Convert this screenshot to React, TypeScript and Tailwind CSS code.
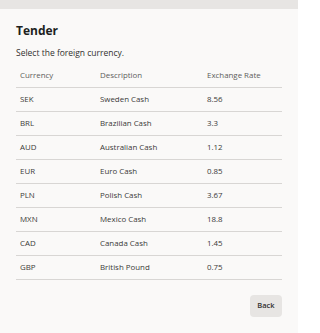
const rows = [
  { code: 'SEK', desc: 'Sweden Cash', rate: '8.56' },
  { code: 'BRL', desc: 'Brazilian Cash', rate: '3.3' },
  { code: 'AUD', desc: 'Australian Cash', rate: '1.12' },
  { code: 'EUR', desc: 'Euro Cash', rate: '0.85' },
  { code: 'PLN', desc: 'Polish Cash', rate: '3.67' },
  { code: 'MXN', desc: 'Mexico Cash', rate: '18.8' },
  { code: 'CAD', desc: 'Canada Cash', rate: '1.45' },
  { code: 'GBP', desc: 'British Pound', rate: '0.75' },
];

export default function App() {
  return (
    <div className="w-[298px] h-[333px] bg-[#faf9f8] font-['Open_Sans',sans-serif] text-[#323130] overflow-hidden">
      <div className="h-[9px] bg-[#e7e5e3]" />
      <div className="px-4 pt-[14px]">
        <h1 className="text-[12px] font-bold leading-4 text-[#201f1e]">Tender</h1>
        <p className="mt-[8px] text-[8.5px] leading-3 text-[#323130]">Select the foreign currency.</p>
        <div className="mt-[6px] text-[7.9px]">
          <div className="grid grid-cols-[80px_107px_1fr] h-[23px] items-center border-b border-[#d8d6d4] text-[#605e5c]">
            <div className="pl-1">Currency</div>
            <div className="pl-1">Description</div>
            <div className="pl-1">Exchange Rate</div>
          </div>
          {rows.map((r) => (
            <div key={r.code} className="grid grid-cols-[80px_107px_1fr] h-6 items-center border-b border-[#d8d6d4] text-[#3b3a39]">
              <div className="pl-1">{r.code}</div>
              <div className="pl-1">{r.desc}</div>
              <div className="pl-1">{r.rate}</div>
            </div>
          ))}
        </div>
        <div className="flex justify-end mt-[15px]">
          <button className="w-8 h-[22px] bg-[#e7e5e3] rounded-sm text-[7.5px] font-semibold text-[#323130]">Back</button>
        </div>
      </div>
    </div>
  );
}
